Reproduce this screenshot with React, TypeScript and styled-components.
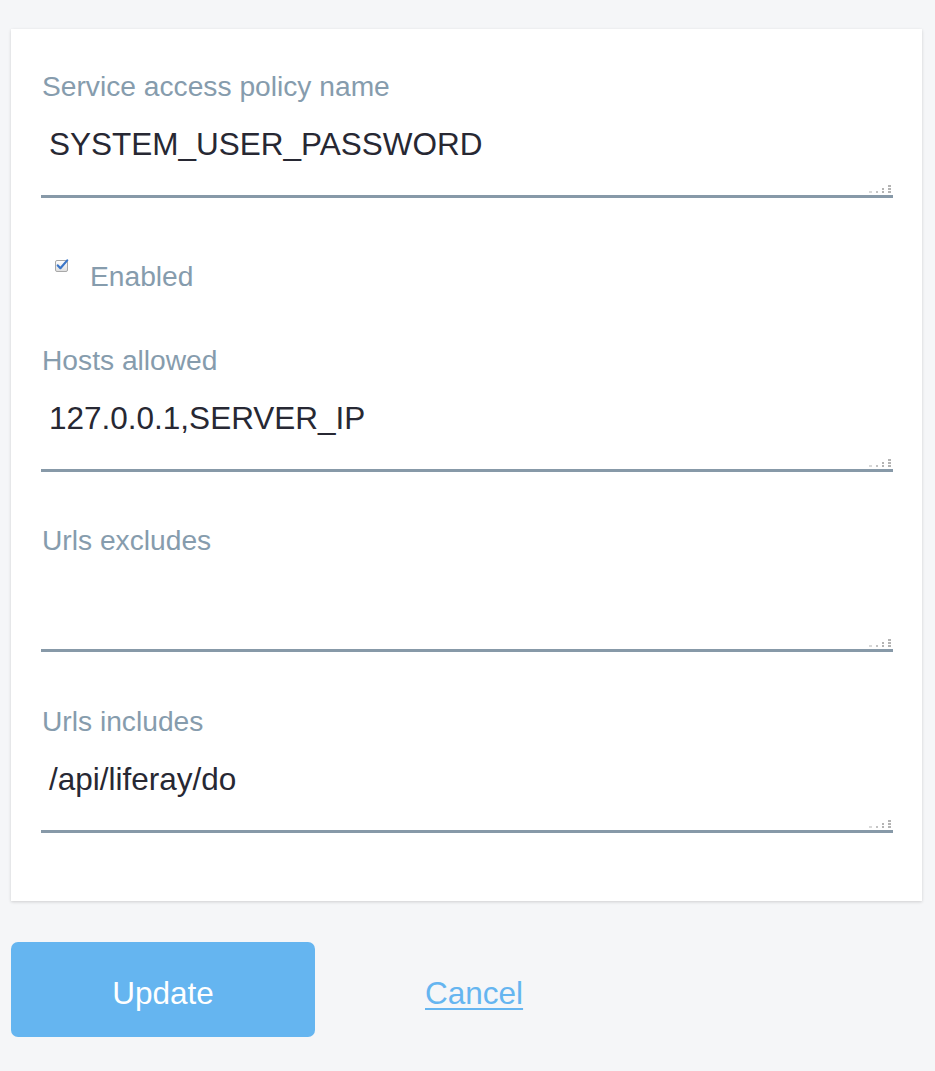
import React from "react";
import styled, { createGlobalStyle } from "styled-components";

const GlobalStyle = createGlobalStyle`
  html, body {
    margin: 0;
    padding: 0;
    background: #f5f6f8;
  }
  body {
    font-family: "Liberation Sans", Arial, sans-serif;
  }
`;

const Page = styled.div`
  padding: 29px 13px 34px 11px;
  display: flex;
  flex-direction: column;
`;

const Card = styled.form`
  background: #ffffff;
  box-shadow: 0 1px 3px rgba(0, 0, 0, 0.16);
  padding: 39px 29px 68px 30px;
  display: flex;
  flex-direction: column;
`;

const Field = styled.div<{ $gap: number }>`
  display: flex;
  flex-direction: column;
  margin-top: ${(p) => p.$gap}px;
`;

const Label = styled.label`
  font-size: 28.2px;
  line-height: 34px;
  color: #869cad;
  padding-left: 1px;
  padding-top: 1px;
  margin-bottom: -1px;
`;

const InputWrap = styled.div`
  position: relative;
`;

const TextArea = styled.textarea`
  box-sizing: border-box;
  display: block;
  width: 100%;
  height: 96px;
  margin: 0;
  padding: 24px 8px 0 8px;
  border: none;
  border-bottom: 3px solid #8799a8;
  outline: none;
  background: transparent;
  font-family: "Liberation Sans", Arial, sans-serif;
  font-size: 31.5px;
  line-height: 36px;
  color: #272833;
  resize: none;
  overflow: hidden;
`;

const Grip = styled.svg`
  position: absolute;
  right: 1px;
  bottom: 4px;
  width: 24px;
  height: 10px;
  pointer-events: none;
`;

const CheckRow = styled.label`
  display: flex;
  align-items: flex-start;
  margin-top: 60px;
  cursor: pointer;
`;

const CheckBox = styled.span`
  width: 15px;
  height: 14px;
  margin-left: 14px;
  margin-top: 1px;
  flex: none;
  display: block;
`;

const CheckText = styled.span`
  font-size: 28.2px;
  line-height: 34px;
  color: #869cad;
  margin-left: 20px;
  padding-top: 1px;
  margin-bottom: -1px;
`;

const Actions = styled.div`
  display: flex;
  align-items: center;
  margin-top: 41px;
`;

const PrimaryButton = styled.button`
  width: 304px;
  height: 95px;
  border: none;
  border-radius: 7px;
  background: #65b5f0;
  color: #ffffff;
  font-family: "Liberation Sans", Arial, sans-serif;
  font-size: 31.5px;
  padding: 7px 0 0 0;
  cursor: pointer;
`;

const LinkButton = styled.a`
  margin-left: 110px;
  padding-top: 8px;
  font-size: 31.5px;
  color: #65b5f0;
  text-decoration: underline;
  text-underline-offset: 4px;
  text-decoration-thickness: 2px;
  cursor: pointer;
`;

const ResizeGrip = () => (
  <Grip viewBox="0 0 24 10">
    <g fill="#b4b4b4">
      <rect x="20" y="1" width="3" height="2" />
      <rect x="20" y="4" width="3" height="2" />
      <rect x="20" y="7" width="3" height="2" />
      <rect x="14" y="4" width="2" height="2" />
      <rect x="14" y="7" width="2" height="2" />
      <rect x="8" y="7" width="2" height="2" opacity="0.8" />
      <rect x="1" y="7" width="3" height="2" opacity="0.5" />
    </g>
  </Grip>
);

const fields = [
  { label: "Hosts allowed", value: "127.0.0.1,SERVER_IP", gap: 50 },
  { label: "Urls excludes", value: "", gap: 50 },
  { label: "Urls includes", value: "/api/liferay/do", gap: 51 },
];

export default function App() {
  return (
    <>
      <GlobalStyle />
      <Page>
        <Card onSubmit={(e) => e.preventDefault()}>
          <Field $gap={0}>
            <Label>Service access policy name</Label>
            <InputWrap>
              <TextArea defaultValue="SYSTEM_USER_PASSWORD" />
              <ResizeGrip />
            </InputWrap>
          </Field>
          <CheckRow>
            <CheckBox role="checkbox" aria-checked="true">
              <svg width="15" height="14" viewBox="0 0 15 14">
                <defs>
                  <linearGradient id="cbg" x1="0" y1="0" x2="0" y2="1">
                    <stop offset="0" stopColor="#ffffff" />
                    <stop offset="1" stopColor="#dedede" />
                  </linearGradient>
                </defs>
                <rect x="0.5" y="1.5" width="12" height="11" rx="1.5" fill="url(#cbg)" stroke="#a8a8a8" />
                <path d="M2.8 6.4 L5.4 9.2 L12.2 1.4" fill="none" stroke="#3b76c8" strokeWidth="2.2" strokeLinecap="round" strokeLinejoin="round" />
              </svg>
            </CheckBox>
            <CheckText>Enabled</CheckText>
          </CheckRow>
          {fields.map((f) => (
            <Field key={f.label} $gap={f.gap}>
              <Label>{f.label}</Label>
              <InputWrap>
                <TextArea defaultValue={f.value} />
                <ResizeGrip />
              </InputWrap>
            </Field>
          ))}
        </Card>
        <Actions>
          <PrimaryButton type="button">Update</PrimaryButton>
          <LinkButton>Cancel</LinkButton>
        </Actions>
      </Page>
    </>
  );
}
